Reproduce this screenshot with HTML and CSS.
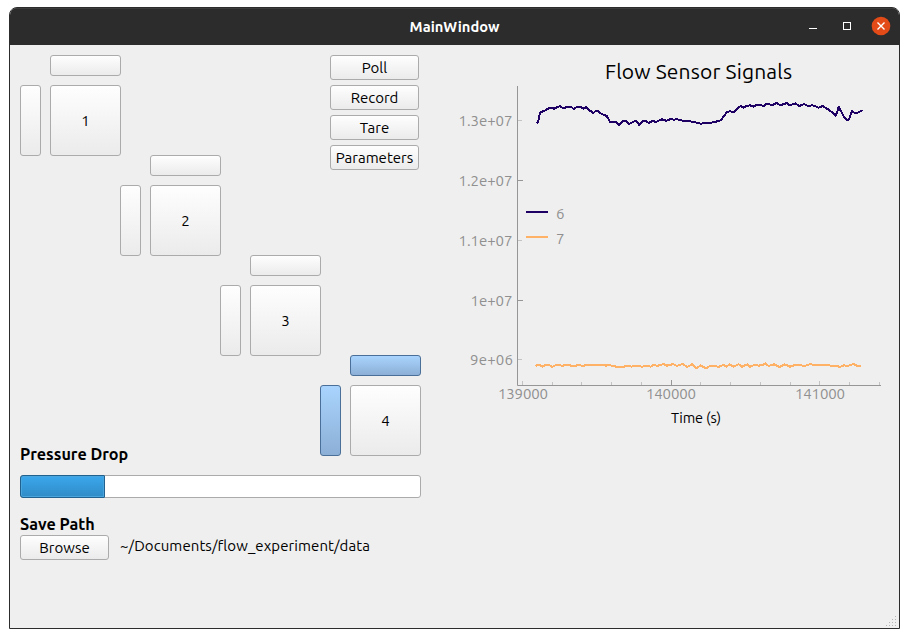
FILE: index.html
```html
<!DOCTYPE html>
<html lang="en">
<head>
<meta charset="utf-8">
<title>MainWindow</title>
<link rel="stylesheet" href="styles.css">
</head>
<body>
<div class="window">
  <header class="titlebar">
    <span></span>
    <span class="title">MainWindow</span>
    <div class="controls">
      <svg width="80" height="20" viewBox="0 0 80 20">
        <path d="M0 10.5h8" stroke="#fff"/>
        <rect x="34.5" y="4.500" width="7" height="7" fill="none" stroke="#fff"/>
        <circle cx="72" cy="8" r="9.300" fill="#e24b17"/>
        <path d="M68.500 4.500l7 7M75.500 4.500l-7 7" stroke="#fff" stroke-width="1.400"/>
      </svg>
    </div>
  </header>
  <main class="client">
    <section class="left">
      <div class="valves">
        <div class="node n1"><button class="bar-h"></button><button class="bar-v"></button><button class="cell">1</button></div>
        <div class="node n2"><button class="bar-h"></button><button class="bar-v"></button><button class="cell">2</button></div>
        <div class="node n3"><button class="bar-h"></button><button class="bar-v"></button><button class="cell">3</button></div>
        <div class="node n4"><button class="bar-h on"></button><button class="bar-v on"></button><button class="cell">4</button></div>
        <div class="actions">
          <button class="btn">Poll</button>
          <button class="btn">Record</button>
          <button class="btn">Tare</button>
          <button class="btn">Parameters</button>
        </div>
      </div>
      <h2 class="pressure">Pressure Drop</h2>
      <div class="progress"><div class="fill"></div></div>
      <h2 class="save">Save Path</h2>
      <div class="path-row"><button class="btn">Browse</button><span class="path">~/Documents/flow_experiment/data</span></div>
    </section>
    <section class="chart">
      <svg width="449" height="390" viewBox="440 50 449 390">
        <text class="chart-title" x="605" y="79" textLength="187">Flow Sensor Signals</text>
        <g class="labels">
          <text x="458.500" y="126" textLength="54">1.3e+07</text>
          <text x="458.500" y="186" textLength="54">1.2e+07</text>
          <text x="458.500" y="246" textLength="54">1.1e+07</text>
          <text x="470.500" y="306" textLength="42">1e+07</text>
          <text x="470" y="365" textLength="43">9e+06</text>
          <text x="498" y="399" textLength="50">139000</text>
          <text x="646" y="399" textLength="50">140000</text>
          <text x="795" y="399" textLength="50">141000</text>
          <text x="556" y="219">6</text>
          <text x="556" y="244">7</text>
        </g>
        <text class="axis-title" x="671" y="423" textLength="50">Time (s)</text>
        <path class="axis" d="M517.5 86V385.500H881"/>
        <path class="tick major" d="M518 180.500h5M518 300.500h5M671.500 380v5"/>
        <path class="tick" d="M518 120.500h4M518 240.500h4M518 359.500h4M522.500 381v4M552.500 382v3M581.500 382v3M611.500 382v3M641.500 382v3M700.500 382v3M730.500 382v3M760.500 382v3M790.500 382v3M819.500 381v4M849.500 382v3M879.500 382v3"/>
        <path class="s6" d="M526 212h22"/>
        <path class="s7" d="M526 237h22"/>
        <g transform="translate(510 80) scale(.33333)">
          <polyline class="s6 data" points="80,130 84,128 90,98 98,94 106,91 112,87 120,84 126,83 132,86 140,82 150,78 160,85 170,81 184,81 191,87 200,81 210,80 220,86 229,81 240,92 250,99 256,94 264,93 270,99 280,104 290,108 300,125 318,126 327,136 334,127 342,122 350,124 358,132 368,126 378,122 387,134 396,126 402,122 408,123 416,129 428,123 438,126 446,122 456,118 468,122 474,121 482,117 492,119 500,118 512,120 524,124 536,123 548,126 560,128 572,131 590,129 610,127 632,121 650,97 660,93 670,97 680,88 692,78 700,83 710,78 720,76 730,80 740,74 754,76 762,78 770,71 782,74 790,74 800,69 810,75 820,73 830,69 840,76 856,70 868,78 882,72 896,79 906,75 926,83 938,78 954,88 966,97 976,107 982,96 986,80 992,92 1004,114 1010,120 1016,120 1026,94 1036,100 1048,96 1058,90"/>
        </g>
        <g transform="translate(440 340) scale(.33333)">
          <polyline class="s7 data" points="286,78 296,74 308,80 318,74 328,75 336,81 346,76 356,74 366,78 376,75 386,75 396,78 408,77 416,74 428,78 440,75 490,74 498,77 506,74 516,78 530,80 552,80 562,77 574,80 590,77 606,80 622,78 632,80 640,75 650,77 662,76 670,71 680,77 690,75 700,72 710,78 728,72 742,81 756,73 770,85 782,76 798,85 810,78 826,79 838,80 850,75 860,80 868,73 880,80 896,73 906,80 922,73 930,80 944,75 956,77 970,74 976,70 986,78 1002,73 1018,81 1034,73 1050,80 1062,76 1082,76 1094,78 1112,72 1120,75 1164,75 1174,78 1190,78 1200,81 1212,76 1222,78 1240,72 1252,78 1262,77"/>
        </g>
      </svg>
      <svg class="grip" width="12" height="12" viewBox="0 0 12 12"><path d="M9 0h1v1h-1zM6 3h1v1h-1zM9 3h1v1h-1zM3 6h1v1h-1zM6 6h1v1h-1zM9 6h1v1h-1zM0 9h1v1h-1zM3 9h1v1h-1zM6 9h1v1h-1zM9 9h1v1h-1z" fill="#b4b4b4"/></svg>
    </section>
  </main>
</div>
</body>
</html>
```
FILE: styles.css
```css
* { box-sizing: border-box; }
body {
  margin: 0;
  padding: 7px 9px 9px;
  background: #fff;
  font: 15px "Ubuntu", "Noto Sans", sans-serif;
  color: #000;
}
.window {
  width: 891px;
  height: 622px;
  border: 1px solid #2c2c2c;
  border-radius: 8px 8px 0 0;
  background: #efefef;
  overflow: hidden;
}
.titlebar {
  height: 37px;
  background: #2c2c2c;
  box-shadow: inset 0 1px #3c3c3c;
  display: grid;
  grid-template-columns: 1fr auto 1fr;
  align-items: center;
}
.title { color: #fff; font-weight: 700; font-size: 14.7px; }
.controls { justify-self: end; margin-right: 10px; height: 20px; padding-top: 1.5px; }
.controls svg { display: block; overflow: visible; }
.client { display: flex; height: 583px; }
.left { width: 430px; padding: 10px; }
.valves {
  display: grid;
  grid-template: repeat(4, 100px) / repeat(4, 100px);
  height: 401px;
}
.node {
  display: grid;
  grid-template: 21px 71px / 21px 71px;
  gap: 9px;
}
.n1 { grid-area: 1 / 1; }
.n2 { grid-area: 2 / 2; }
.n3 { grid-area: 3 / 3; }
.n4 { grid-area: 4 / 4; }
.actions {
  grid-area: 1 / 4;
  display: flex;
  flex-direction: column;
  gap: 5px;
  margin-left: 10px;
}
button {
  font: inherit;
  color: inherit;
  padding: 0;
  border: 1px solid #ababab;
  border-radius: 3px;
  background: linear-gradient(#fefefe, #ebebeb);
}
.bar-h { grid-column: 2; }
.bar-v { grid-column: 1; }
.on { border-color: #4a6f98; background: linear-gradient(#a9d4fd, #8cafd6); }
.btn { width: 89px; height: 25px; flex: none; line-height: 23px; }
h2 { margin: 0; font-size: 16.2px; line-height: 20px; font-weight: 700; white-space: nowrap; }
.pressure { margin-top: -12px; }
.progress {
  width: 401px;
  height: 23px;
  margin-top: 11px;
  border: 1px solid #ababab;
  border-radius: 3px;
  background: #fff;
}
.fill {
  width: 85px;
  height: 23px;
  margin: -1px;
  border: 1px solid #20618f;
  border-radius: 3px 1px 1px 3px;
  background: linear-gradient(#3ba7ed, #308cc6);
  box-shadow: inset 0 0 0 1px #4aa5dd;
}
.save { margin-top: 16px; }
.path-row { display: flex; gap: 11px; margin-top: 1px; }
.path { line-height: 22px; white-space: nowrap; letter-spacing: .08px; }
.chart { flex: 1; display: flex; flex-direction: column; justify-content: space-between; padding-top: 5px; }
.chart svg { display: block; }
.chart .grip { align-self: flex-end; margin: 0 1px 0 0; }
.chart-title { font-size: 21px; }
.labels { font-size: 15px; fill: #909090; }
.axis-title { font-size: 14.5px; }
.axis, .tick { fill: none; stroke: #969696; }
.tick { stroke: #c3c3c3; }
.major { stroke: #969696; }
.s6, .s7 { fill: none; stroke-width: 2; }
.s6 { stroke: #1e0064; }
.s7 { stroke: #ffb266; }
.data { stroke-width: 6; stroke-linejoin: round; shape-rendering: crispEdges; }
```
